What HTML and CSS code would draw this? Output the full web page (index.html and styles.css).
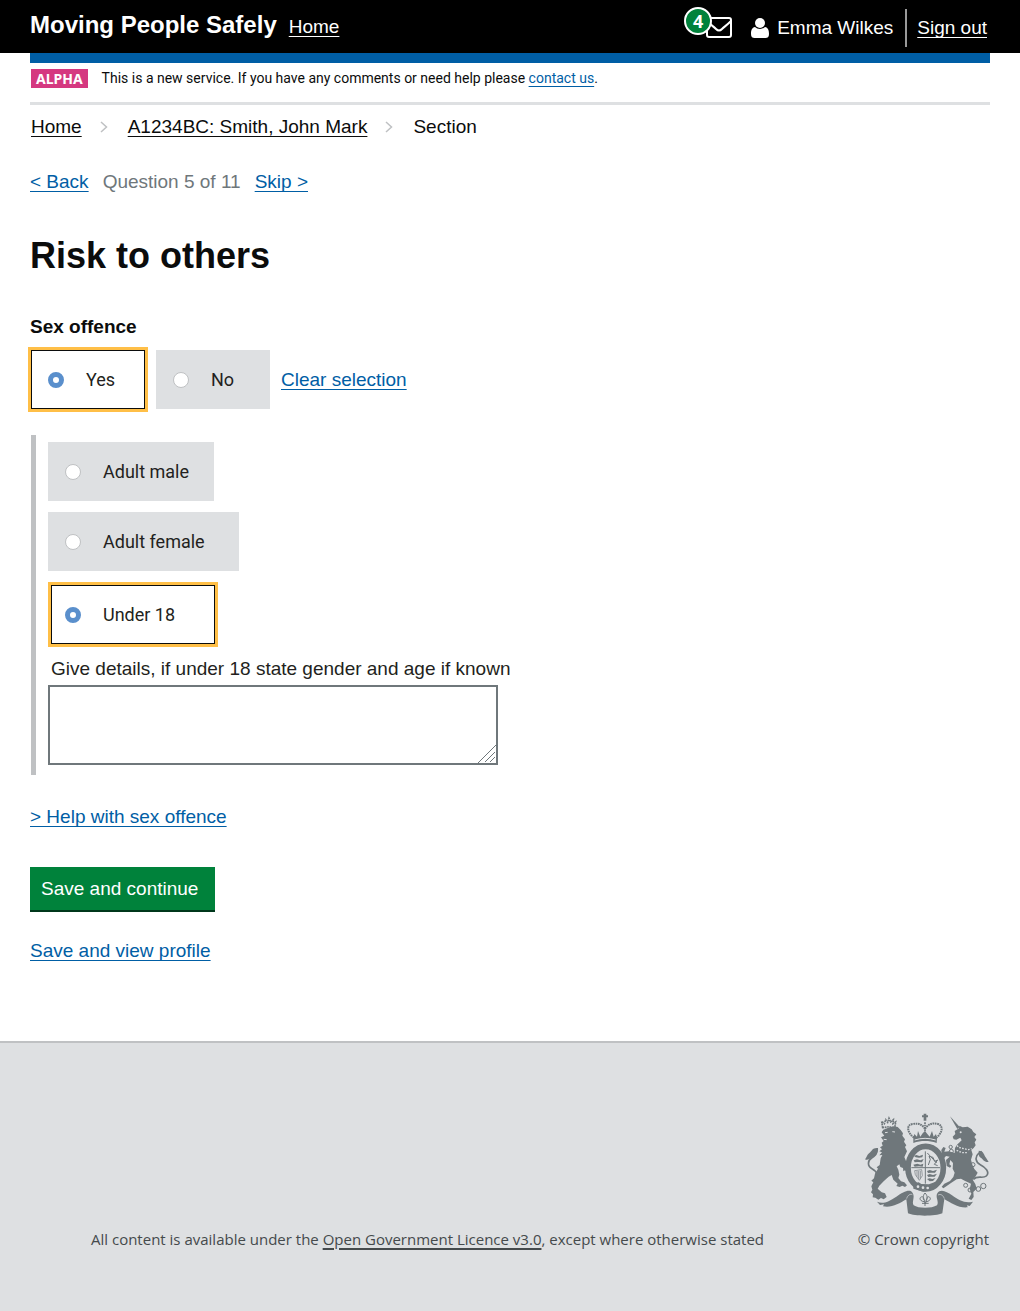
FILE: index.html
```html
<!DOCTYPE html>
<html lang="en">
<head>
<meta charset="utf-8">
<meta name="viewport" content="width=device-width, initial-scale=1">
<title>Risk to others - Moving People Safely</title>
<link rel="stylesheet" href="styles.css">
</head>
<body>
<header class="header">
  <div class="brand">
    <span class="brand-name">Moving People Safely</span>
    <a class="header-link" href="#">Home</a>
  </div>
  <div class="account">
    <a class="messages" href="#" aria-label="4 messages">
      <svg class="icon-mail" viewBox="0 0 26 21" width="26" height="21" aria-hidden="true">
        <rect x="1" y="1" width="24" height="19" rx="2" fill="none" stroke="#fff" stroke-width="2"/>
        <path d="M1 4C5 8 8 10 10 12C12 14 14 14 16 12C18 10 21 8 25 4" fill="none" stroke="#fff" stroke-width="2"/>
      </svg>
      <span class="badge">4</span>
    </a>
    <svg class="icon-user" viewBox="0 0 18 20" width="18" height="20" aria-hidden="true">
      <path d="M4 9C1 9.500 0 12 0 16C0 19 1.500 20 3.500 20H14.500C16.500 20 18 19 18 16C18 12 17 9.500 14 9C11.500 11.500 6.500 11.500 4 9Z" fill="#fff"/>
      <circle cx="9" cy="5" r="5" fill="#fff"/>
    </svg>
    <span class="user-name">Emma Wilkes</span>
    <span class="sign-out"><a class="header-link" href="#">Sign out</a></span>
  </div>
</header>

<div class="container">
  <div class="phase-banner">
    <strong class="phase-tag">ALPHA</strong>
    <span>This is a new service. If you have any comments or need help please <a class="link" href="#">contact us</a>.</span>
  </div>

  <nav class="breadcrumbs" aria-label="Breadcrumb">
    <a href="#">Home</a>
    <svg class="chevron" viewBox="0 0 8 12" width="8" height="12" aria-hidden="true"><path d="M1 1L6.500 6L1 11" fill="none" stroke="#bfc1c3" stroke-width="1.500"/></svg>
    <a href="#">A1234BC: Smith, John Mark</a>
    <svg class="chevron" viewBox="0 0 8 12" width="8" height="12" aria-hidden="true"><path d="M1 1L6.500 6L1 11" fill="none" stroke="#bfc1c3" stroke-width="1.500"/></svg>
    <span>Section</span>
  </nav>

  <nav class="steps" aria-label="Questions">
    <a class="link" href="#">&lt; Back</a>
    <span class="steps-count">Question 5 of 11</span>
    <a class="link" href="#">Skip &gt;</a>
  </nav>

  <main>
    <h1>Risk to others</h1>
    <form>
      <fieldset>
        <legend>Sex offence</legend>
        <div class="inline-choices">
          <label class="choice choice-selected"><input type="radio" name="offence" checked>Yes</label>
          <label class="choice"><input type="radio" name="offence">No</label>
          <a class="link" href="#">Clear selection</a>
        </div>
      </fieldset>
      <div class="panel">
        <div class="stacked-choices" role="radiogroup" aria-label="Victim">
          <label class="choice choice-medium"><input type="radio" name="victim">Adult male</label>
          <label class="choice choice-wide"><input type="radio" name="victim">Adult female</label>
          <label class="choice choice-medium choice-selected"><input type="radio" name="victim" checked>Under 18</label>
        </div>
        <label class="details-label" for="details">Give details, if under 18 state gender and age if known</label>
        <div class="details">
          <textarea id="details"></textarea>
          <svg class="grip" viewBox="0 0 18 18" width="18" height="18" aria-hidden="true"><path d="M0 18L18 0M7 17L17 7M12 17L17 12" fill="none" stroke="#6f777b"/></svg>
        </div>
      </div>
      <div class="actions">
        <a class="link" href="#">&gt; Help with sex offence</a>
        <button class="button" type="submit">Save and continue</button>
        <a class="link" href="#">Save and view profile</a>
      </div>
    </form>
  </main>
</div>

<footer class="footer">
  <p class="licence">All content is available under the <a href="#">Open Government Licence v3.0</a>, except where otherwise stated</p>
  <div class="copyright">
    <svg class="crest" viewBox="48 40 372 309" width="124" height="103" fill="#6f777b" aria-hidden="true">
      <!-- lion -->
      <path d="M101 84L98 65L106 72L110 60L116 68L120 56L125 67L133 60L132 72L140 67L137 86L121 81Z" fill="none" stroke="#6f777b" stroke-width="5" stroke-dasharray="5 2"/>
      <path d="M103 90L118 84L134 80L146 82L155 91L162 101L160 108L168 119L165 126L172 137L168 142L174 155L166 172L171 184L184 195L180 201L185 208L177 211L175 218L168 212L163 215L162 205L154 202L151 194L143 200L148 210L151 225L148 235L156 245L166 248L174 257L168 262L160 258L152 262L142 259L146 252L133 240L128 226L119 231L104 245L91 258L86 267L98 278L108 281L113 292L104 299L96 295L88 300L79 294L71 293L72 284L66 278L70 270L67 260L73 248L67 243L75 236L78 222L87 207L83 203L92 196L95 176L100 166L91 167L99 158L91 155L99 149L93 143L101 138L98 129L104 124L96 113L106 108L98 98Z"/>
      <path d="M77 242C88 226 84 215 69 207C54 199 56 182 68 175C78 169 85 162 82 151" fill="none" stroke="#6f777b" stroke-width="5"/>
      <path d="M87 145C70 143 70 153 60 161C53 167 53 175 48 179C59 185 67 172 76 169C86 165 88 154 87 145Z"/>
      <path d="M108 99L116 98M130 96L138 97M104 119L113 120" fill="none" stroke="#dee0e2" stroke-width="3"/>
      <!-- unicorn -->
      <path d="M303 50L332 82L325 88Z"/>
      <path d="M317 94L330 86L331 78L341 83L356 81L368 89L373 97L382 104L376 112L382 120L377 128L380 137L374 145L367 151L371 164L366 180L370 195L376 208L386 219L380 230L371 240L379 253L383 267L373 277L374 292L367 301L359 297L367 282L362 268L366 252L347 243L336 237L323 239L306 250L292 260L283 266L278 261L286 252L303 244L313 232L317 219L311 207L312 190L304 181L301 194L307 199L303 204L293 199L291 181L302 171L291 169L285 176L279 172L277 151L283 142L290 145L286 156L300 155L317 160L318 145L324 135L338 122L334 114L322 120L314 119L311 111L319 103Z"/>
      <path d="M373 239C385 226 402 238 412 229C424 218 408 202 394 195C379 188 377 171 389 161L398 155" fill="none" stroke="#6f777b" stroke-width="5"/>
      <path d="M389 153C405 153 405 167 411 174L419 187C404 188 403 178 395 174C388 169 390 163 389 153Z"/>
      <path d="M318 131L329 143L344 147L358 150L368 147M323 152L339 159L355 159" fill="none" stroke="#dee0e2" stroke-width="4" stroke-dasharray="5 4"/>
      <circle cx="335" cy="98" r="3" fill="#dee0e2"/>
      <g fill="none" stroke="#6f777b" stroke-width="3">
        <circle cx="307" cy="155" r="6"/><circle cx="305" cy="142" r="5"/><circle cx="372" cy="195" r="6"/><circle cx="367" cy="218" r="5"/><circle cx="350" cy="257" r="6"/><circle cx="363" cy="271" r="6"/><circle cx="388" cy="268" r="7"/><circle cx="403" cy="259" r="8"/>
      </g>
      <!-- crown -->
      <path d="M224 42H232V47H237V53H232V63H224V53H219V47H224Z"/>
      <g fill="none" stroke="#6f777b" stroke-width="6" stroke-dasharray="5 2">
        <path d="M195 114C174 99 171 75 191 73C211 69 222 77 228 88C235 76 247 68 267 73C285 79 279 101 262 114"/>
        <path d="M228 68V110" stroke-width="5"/>
      </g>
      <path d="M193 116L196 103L204 111L207 94L214 111L221 101L228 94L235 103L242 111L249 94L254 111L261 103L264 116L263 130C240 122 216 122 193 130Z"/>
      <path d="M197 121Q228 111 260 121" fill="none" stroke="#dee0e2" stroke-width="3"/>
      <!-- garter and shield -->
      <ellipse cx="230" cy="204" rx="53" ry="64" fill="none" stroke="#6f777b" stroke-width="17"/>
      <path d="M229 155V252M187 204H273" fill="none" stroke="#6f777b" stroke-width="3"/>
      <path d="M195 169L202 166L211 169L222 165L220 173L210 174L200 173ZM194 182L204 179L214 182L224 178L219 188L207 187L197 188ZM193 195L205 192L214 195L223 192L221 201L210 200L197 201Z"/>
      <path d="M234 214L242 211L252 214L264 210L258 219L246 219L237 220ZM234 226L242 223L252 226L264 222L257 231L246 231L238 232ZM234 238L242 236L250 238L260 235L252 244L242 245Z"/>
      <path d="M235 160L263 190M238 196L244 179L240 170L252 173L257 185L266 181L256 194L266 198" fill="none" stroke="#6f777b" stroke-width="3"/>
      <path d="M197 213L218 210L220 228L211 242L199 225ZM204 214V231M209 214V238M214 214V236" fill="none" stroke="#6f777b" stroke-width="2"/>
      <path d="M193 251L209 248L217 253L240 254L258 247L263 254L247 270L223 276L193 267Z"/>
      <g fill="#dee0e2"><circle cx="207" cy="261" r="4"/><circle cx="222" cy="264" r="4"/><circle cx="236" cy="265" r="4"/></g>
      <!-- scroll -->
      <path d="M84 306C102 314 118 307 142 291C163 277 183 266 191 280C199 292 187 307 194 317C208 327 248 327 264 317C271 306 258 293 265 281C275 266 293 276 309 287C330 302 348 312 372 306L362 319L354 317L356 323C330 326 305 310 286 298L280 341C260 350 198 351 177 341L172 299C151 312 126 326 102 320L105 314L93 316Z"/>
      <path d="M173 297C176 286 184 282 190 285M286 297C282 286 275 282 267 286" fill="none" stroke="#dee0e2" stroke-width="2"/>
      <path d="M228 280C219 290 225 296 229 313C234 296 238 290 228 280ZM226 306C211 305 209 292 220 291C226 293 219 299 227 302M231 306C246 305 248 292 237 291C231 293 238 299 230 302M219 311H239M228 305V319" fill="none" stroke="#6f777b" stroke-width="3"/>
    </svg>
    <span>© Crown copyright</span>
  </div>
</footer>
</body>
</html>
```
FILE: styles.css
```css
* { box-sizing: border-box; }

body {
  margin: 0;
  min-height: 100vh;
  display: flex;
  flex-direction: column;
  background: #fff;
  color: #0b0c0c;
  font: 19px/24px "Liberation Sans", Arial, sans-serif;
}

a {
  color: inherit;
  text-decoration-thickness: 1px;
  text-underline-offset: 3px;
  text-decoration-skip-ink: none;
}

.link { color: #005ea5; }

/* Header */
.header {
  display: flex;
  justify-content: space-between;
  background: #000;
  color: #fff;
  padding: 0 33px 0 30px;
  min-height: 53px;
}

.brand {
  display: flex;
  align-items: baseline;
  gap: 12px;
  padding-top: 13px;
}

.brand-name { font-size: 24px; font-weight: bold; }

.account { display: flex; align-items: center; padding-top: 2px; }

.messages { position: relative; display: flex; margin-right: 19px; }

.badge {
  position: absolute;
  left: -22px;
  top: -10px;
  width: 28px;
  height: 28px;
  border: 2px solid #fff;
  border-radius: 50%;
  background: #00823b;
  font: bold 18px/24px "Noto Sans", sans-serif;
  text-align: center;
}

.icon-user { margin-right: 8px; }

.sign-out {
  margin-left: 12px;
  padding: 7px 0 7px 10px;
  border-left: 2px solid #999;
}

/* Page body */
.container { flex: 1; margin: 0 30px; }

.phase-banner {
  display: flex;
  gap: 14px;
  border-top: 10px solid #005ea5;
  border-bottom: 3px solid #dee0e2;
  padding: 5px 1px 14px;
  font: 14px/20px Roboto, sans-serif;
}

.phase-tag {
  align-self: center;
  background: #d53880;
  color: #fff;
  padding: 0 5px;
  font: bold 14px/19px "Noto Sans", sans-serif;
}

.breadcrumbs {
  display: flex;
  align-items: center;
  padding: 10px 1px;
}

.chevron { margin: 0 20px 0 18px; }

.steps {
  display: flex;
  gap: 14px;
  padding-top: 21px;
}

.steps-count { color: #6f777b; }

h1 {
  margin: 42px 0 39px;
  font-size: 36px;
  line-height: 40px;
}

fieldset { margin: 0; padding: 0; border: 0; }

legend { padding: 0; font-weight: bold; }

.inline-choices {
  display: flex;
  align-items: center;
  gap: 11px;
  padding: 11px 1px 0;
}

.choice {
  display: flex;
  align-items: center;
  gap: 22px;
  min-width: 114px;
  height: 59px;
  padding: 0 17px;
  background: #dee0e2;
  color: #231f20;
  font-family: Roboto, sans-serif;
  font-size: 18px;
}

.choice input {
  appearance: none;
  width: 16px;
  height: 16px;
  margin: 0;
  border: 1px solid #bfc1c3;
  border-radius: 50%;
  background: #fff;
}

.choice input:checked { border: 5px solid #5a8fcc; }

.choice-selected {
  padding: 0 16px;
  border: 1px solid #0b0c0c;
  outline: 3px solid #ffbf47;
  background: #fff;
}

.panel {
  margin: 26px 0 0 1px;
  padding: 7px 0 10px 12px;
  border-left: 5px solid #bfc1c3;
}

.stacked-choices {
  display: flex;
  flex-direction: column;
  align-items: flex-start;
  gap: 11px;
}

.choice-medium { min-width: 166px; }
.choice-wide { min-width: 191px; }

.stacked-choices .choice-selected {
  min-width: 164px;
  margin: 3px;
  padding: 0 13px;
}

.details-label {
  display: block;
  padding: 10px 3px 4px;
  color: #231f20;
}

.details {
  position: relative;
  max-width: 450px;
}

textarea {
  display: block;
  width: 100%;
  height: 80px;
  border: 2px solid #6f777b;
  background: #fff;
  padding: 4px;
  font: inherit;
  resize: none;
}

.grip { position: absolute; right: 2px; bottom: 2px; }

.actions {
  display: flex;
  flex-direction: column;
  align-items: flex-start;
  padding: 30px 0 78px;
}

.button {
  margin: 38px 0 27px;
  padding: 10px 17px 9px 11px;
  border: 0;
  border-bottom: 2px solid #00371b;
  background: #00823b;
  color: #fff;
  font: inherit;
}

/* Footer */
.footer {
  display: flex;
  justify-content: space-between;
  align-items: flex-end;
  border-top: 2px solid #bfc1c3;
  background: #dee0e2;
  color: #454a4c;
  padding: 70px 31px 62px 91px;
  font: 15px/22px "Open Sans", sans-serif;
}

.licence { margin: 0; }

.licence a { text-decoration-thickness: 2px; text-decoration-skip-ink: auto; }

.copyright {
  display: flex;
  flex-direction: column;
  align-items: flex-end;
  gap: 12px;
}
```
